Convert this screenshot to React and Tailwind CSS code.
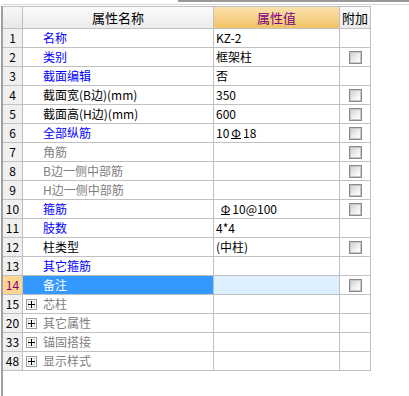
const rows = [
  { no: "1", name: "名称", color: "blue", value: "KZ-2" },
  { no: "2", name: "类别", color: "blue", value: "框架柱", check: true },
  { no: "3", name: "截面编辑", color: "blue", value: "否" },
  { no: "4", name: "截面宽(B边)(mm)", color: "black", value: "350", check: true },
  { no: "5", name: "截面高(H边)(mm)", color: "black", value: "600", check: true },
  { no: "6", name: "全部纵筋", color: "blue", value: "10|18", check: true },
  { no: "7", name: "角筋", color: "gray", value: "", check: true },
  { no: "8", name: "B边一侧中部筋", color: "gray", value: "", check: true },
  { no: "9", name: "H边一侧中部筋", color: "gray", value: "", check: true },
  { no: "10", name: "箍筋", color: "blue", value: " |10@100", check: true },
  { no: "11", name: "肢数", color: "blue", value: "4*4" },
  { no: "12", name: "柱类型", color: "black", value: "(中柱)", check: true },
  { no: "13", name: "其它箍筋", color: "blue", value: "" },
  { no: "14", name: "备注", color: "white", value: "", check: true, selected: true },
  { no: "15", name: "芯柱", color: "gray", group: true },
  { no: "20", name: "其它属性", color: "gray", group: true },
  { no: "33", name: "锚固搭接", color: "gray", group: true },
  { no: "48", name: "显示样式", color: "gray", group: true },
];

const nameColor = {
  blue: "text-[#0000ff]",
  black: "text-black",
  gray: "text-[#808080]",
  white: "text-white",
};

function Rebar() {
  return (
    <span className="inline-block mx-[2px] border-b border-black leading-[11px]">Φ</span>
  );
}

function Value({ text }) {
  if (!text.includes("|")) return <span>{text}</span>;
  const [a, b] = text.split("|");
  return (
    <span>
      {a}
      <Rebar />
      {b}
    </span>
  );
}

function CheckBox() {
  return (
    <div className="w-[13px] h-[13px] border border-[#8a8a8a] p-px bg-[#c8c8c8]">
      <div className="w-full h-full bg-gradient-to-br from-[#d2d2d2] via-[#ececec] to-white" />
    </div>
  );
}

function PlusBox() {
  return (
    <div className="w-[11px] h-[11px] border border-[#9c9c9c] p-px bg-white flex items-center justify-center">
      <div className="relative w-[7px] h-[7px] border border-[#d6d6d6] bg-white flex items-center justify-center">
        <div className="absolute w-[7px] h-px bg-black" />
        <div className="absolute w-px h-[7px] bg-black" />
      </div>
    </div>
  );
}

export default function App() {
  return (
    <div
      className="w-[409px] h-[396px] bg-white overflow-hidden flex flex-col text-[12px] text-black"
      style={{ fontFamily: '"Noto Sans CJK SC", "DejaVu Sans", sans-serif' }}
    >
      <div className="ml-[178px] h-[2px] bg-[#9a9a9a] shrink-0" />
      <div className="h-[2px] shrink-0" />
      <div className="ml-[2px] h-px bg-[#d8d8d8] shrink-0" />
      <div className="h-px shrink-0" />

      <div className="flex flex-1">
        <div className="ml-px w-[2px] bg-[#a0a0a0]" />
        <div className="self-start w-[368px] border-t border-r border-[#c0c0c0]">
          <div className="flex h-[22px] border-b border-[#c0c0c0]">
            <div className="w-[20px] border-r border-[#c0c0c0] bg-gradient-to-b from-[#f8f8f8] to-[#e8e8e8]" />
            <div className="w-[191px] border-r border-[#c0c0c0] bg-gradient-to-b from-[#fbfbfb] to-[#ebebeb] flex items-center justify-center text-[13px]">
              属性名称
            </div>
            <div className="w-[126px] border-r border-[#c0c0c0] bg-gradient-to-b from-[#fbe2ae] to-[#f1c263] flex items-center justify-center text-[13px] text-[#800080]">
              属性值
            </div>
            <div className="w-[30px] bg-gradient-to-b from-[#fbfbfb] to-[#ebebeb] flex items-center justify-center text-[13px]">
              附加
            </div>
          </div>

          {rows.map((r) => (
            <div key={r.no} className="flex h-[19px] border-b border-[#c0c0c0]">
              <div
                className={
                  r.selected
                    ? "w-[20px] border-r border-[#c0c0c0] bg-[#ffd592] text-[#800080] flex items-center justify-center"
                    : "w-[20px] border-r border-[#c0c0c0] bg-[#f0f0f0] flex items-center justify-center"
                }
              >
                {r.no}
              </div>
              <div
                className={
                  (r.selected ? "bg-[#3399ff] " : "") +
                  "w-[191px] border-r border-[#c0c0c0] flex items-center gap-[6px] pl-[3px] " +
                  nameColor[r.color]
                }
              >
                {r.group ? <PlusBox /> : <div className="w-[11px]" />}
                <span className="whitespace-pre">{r.name}</span>
              </div>
              <div
                className={
                  (r.selected ? "bg-[#def0ff] " : "") +
                  "w-[126px] border-r border-[#c0c0c0] flex items-center pl-[2px] whitespace-pre"
                }
              >
                {r.value ? <Value text={r.value} /> : null}
              </div>
              <div className="w-[30px] flex items-center justify-center">
                {r.check ? <CheckBox /> : null}
              </div>
            </div>
          ))}
        </div>
      </div>
    </div>
  );
}
